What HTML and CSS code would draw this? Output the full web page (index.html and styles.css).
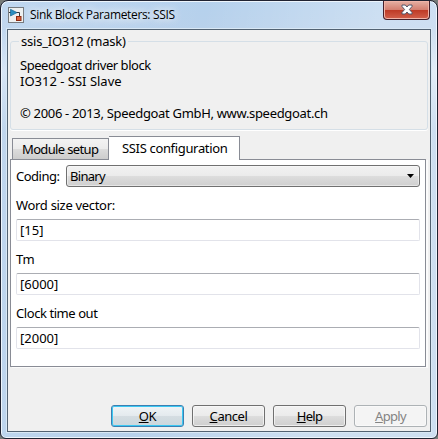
FILE: index.html
```html
<!DOCTYPE html>
<html lang="en">
<head>
<meta charset="utf-8">
<title>Sink Block Parameters: SSIS</title>
<link rel="stylesheet" href="styles.css">
</head>
<body>
<div class="window">
  <header class="titlebar">
    <svg class="app-icon" width="16" height="16" viewBox="0 0 16 16"><rect x=".5" y=".5" width="15" height="15" fill="#eef0f0" stroke="#777b80"/><path d="M1 5.5h2M8 5.5h3.5v4" fill="none" stroke="#333a42"/><path d="M2.5 2.300 9 5.600 2.500 9z" fill="#2a8fc0" stroke="#176690" stroke-width=".7"/><rect x="8.500" y="9.500" width="4.500" height="4" fill="#dd653d" stroke="#8d2b12"/></svg>
    <h1 class="title">Sink Block Parameters: SSIS</h1>
    <button class="close" aria-label="Close"><svg width="12" height="11" viewBox="0 0 12 11"><path d="M1 1h3.300L6 3l1.700-2H11v1.500L8.400 5.500 11 8.500V10H7.700L6 8l-1.700 2H1V8.500l2.600-3L1 2.500z" fill="#fff" stroke="#53566a"/></svg></button>
  </header>
  <main class="client">
    <fieldset class="group">
      <legend><span class="t-mask">ssis_IO312 (mask)</span></legend>
      <p class="t-driver">Speedgoat driver block</p>
      <p>IO312 - SSI Slave</p>
      <p class="copyright">© 2006 - 2013, Speedgoat GmbH, www.speedgoat.ch</p>
    </fieldset>
    <nav class="tabs">
      <div class="tab"><span class="t-module">Module setup</span></div>
      <div class="tab active"><span class="t-config">SSIS configuration</span></div>
    </nav>
    <section class="panel">
      <div class="row"><label class="t-coding">Coding:</label><div class="combo"><span class="t-binary">Binary</span><svg width="7" height="4" viewBox="0 0 7 4"><path d="M0 0h7L3.500 4z"/></svg></div></div>
      <label class="label"><span class="t-word">Word size vector:</span></label>
      <div class="field">[15]</div>
      <label class="label"><span>Tm</span></label>
      <div class="field">[6000]</div>
      <label class="label"><span class="t-clock">Clock time out</span></label>
      <div class="field">[2000]</div>
    </section>
    <footer class="actions">
      <button class="btn default"><span class="t-ok"><u>O</u>K</span></button>
      <button class="btn"><span class="t-cancel"><u>C</u>ancel</span></button>
      <button class="btn"><span class="t-help"><u>H</u>elp</span></button>
      <button class="btn disabled" disabled><span class="t-apply"><u>A</u>pply</span></button>
    </footer>
  </main>
</div>
</body>
</html>
```

FILE: styles.css
```css
* { box-sizing: border-box; }
body { margin: 0; background: #777b78; font: 13px/16px "Noto Sans", sans-serif; color: #000; overflow: hidden; }
h1, p { margin: 0; font-weight: normal; }
.window { width: 438px; height: 439px; border: 1px solid #202332; border-radius: 8px 8px 6px 6px; padding: 0 6px 6px; background: linear-gradient(100deg, #dfeafa40 0, #fff0 40%, #ffffff50 75%), linear-gradient(#b5d1ed 0, #b8d1eb 28px, #d5e4f4 70px, #b7d0ea 130px, #b7d1eb); box-shadow: inset 0 0 0 1px #edf5fc; }
.titlebar { height: 28px; display: flex; align-items: flex-start; padding: 0 1px; }
.app-icon { margin-top: 6px; }
.title { font: 12px/16px "Open Sans", sans-serif; margin: 6px 0 0 6px; white-space: nowrap; letter-spacing: -.34px; text-shadow: 0 0 8px #fff, 0 0 10px #fff; }
.close { margin-left: auto; width: 47px; height: 19px; padding: 0 0 1px; border: 1px solid #45202b; border-top: 0; border-radius: 0 0 4px 4px; background: linear-gradient(#e5b0a4, #d47f70 48%, #bd3925 50%, #d3614c); box-shadow: inset 0 0 0 1px #f0b4a8; display: flex; align-items: center; justify-content: center; }
.client { width: 424px; height: 403px; background: #f0f0f0; border: 1px solid #526272; padding: 3px 2px 0; box-shadow: 0 0 0 1px #d9e8f5; display: flex; flex-direction: column; }
.group { margin: 0; height: 97px; width: 418px; padding: 8px 0 0 9px; border: 1px solid #d5dfe7; border-radius: 3px; box-shadow: 0 1px 0 #fff; white-space: nowrap; }
.group legend { padding: 0 2px; height: 16px; margin-left: -1px; }
.copyright { margin-top: 16px; letter-spacing: -.32px; }
.t-mask { letter-spacing: -.22px; }
.t-driver { letter-spacing: -.46px; }
.t-module { letter-spacing: -.65px; }
.t-config { letter-spacing: -.34px; }
.t-coding { letter-spacing: -.5px; }
.t-binary { letter-spacing: -.7px; }
.t-word { letter-spacing: -.31px; }
.t-clock { letter-spacing: -.43px; }
.t-ok { letter-spacing: -.4px; }
.t-cancel { letter-spacing: -.45px; }
.t-help { letter-spacing: -.7px; }
.t-apply { letter-spacing: -.7px; }
.tabs { height: 24px; margin: 6px 0 -1px 2px; display: flex; align-items: flex-end; position: relative; white-space: nowrap; }
.tab { width: 97px; height: 22px; border: 1px solid #898c95; background: linear-gradient(#f3f3f3, #ebebeb 50%, #dcdcdc 51%, #cdcdcd); padding: 2px 0 0 9px; }
.tab.active { width: 131px; height: 24px; border-left: 0; border-bottom: 0; background: #fff; padding: 3px 0 0 13px; }
.panel { width: 416px; height: 208px; background: #fff; border: 1px solid #898c95; box-shadow: 2px 1px 0 #fbfbfb; padding: 5px 5px 0; }
.row { display: flex; height: 22px; align-items: center; }
.row label { width: 50px; white-space: nowrap; }
.combo { width: 354px; height: 22px; border: 1px solid #707070; border-radius: 3px; display: flex; align-items: center; justify-content: space-between; padding: 0 5px 0 3px; background: linear-gradient(#f2f2f2, #ebebeb 49%, #ddd 50%, #cfcfcf); box-shadow: inset 0 0 0 1px #fbfbfb80; }
.label { display: block; height: 16px; margin: 10px 0 6px; }
.field { width: 404px; height: 22px; border: 1px solid #e2e3ea; border-top-color: #abadb3; border-radius: 2px; padding: 2px 3px; background: #fff; }
.actions { display: flex; gap: 8px; margin: 38px 0 0 101px; }
.btn { font: inherit; width: 73px; height: 22px; padding: 0; color: #000; border: 1px solid #707070; border-radius: 3px; background: linear-gradient(#f2f2f2, #ebebeb 49%, #ddd 50%, #cfcfcf); box-shadow: inset 0 0 0 1px #fbfbfbb0; line-height: 16px; }
.btn.default { border-color: #3c7fb1; box-shadow: inset 0 0 0 1px #3bc8f3; background: linear-gradient(#f0f4f6, #e4eaee 49%, #d5dde2 50%, #cbd7dd); }
.btn.disabled { color: #838383; border-color: #adb2b5; background: #f4f4f4; }
```
